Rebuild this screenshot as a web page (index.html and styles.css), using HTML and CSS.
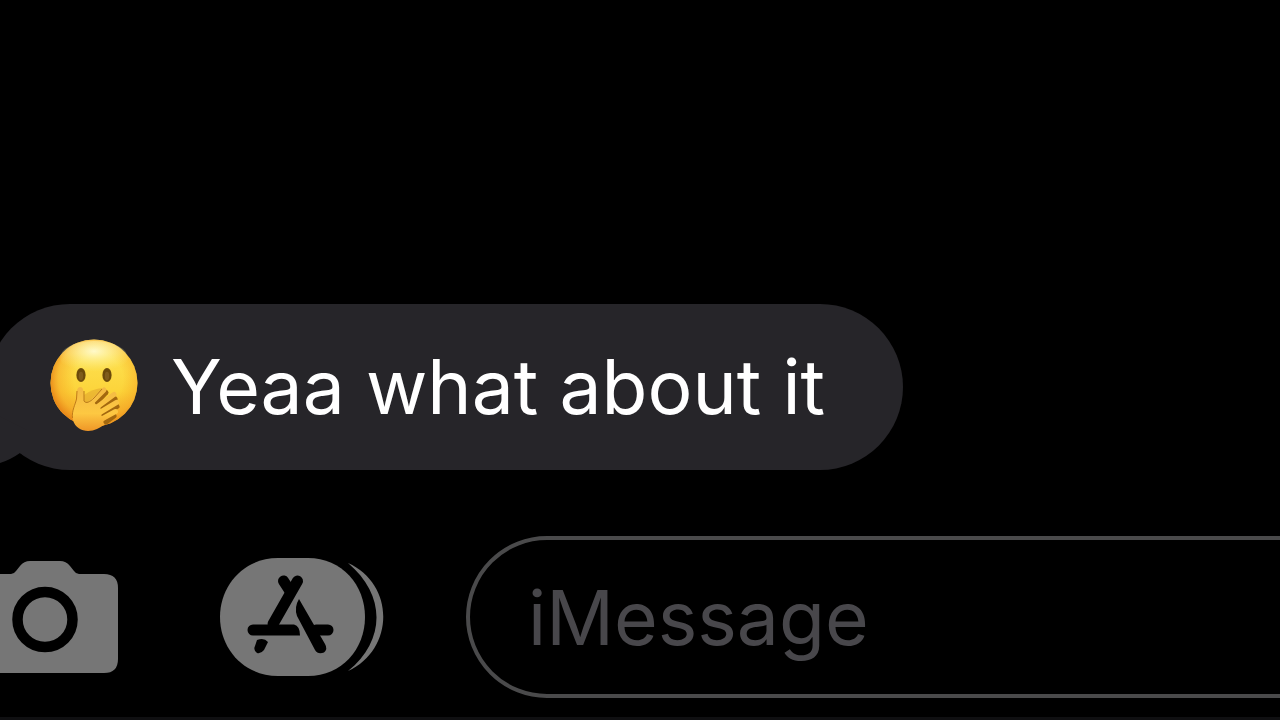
FILE: index.html
```html
<!DOCTYPE html>
<html lang="en">
<head>
    <meta charset="UTF-8">
    <meta name="viewport" content="width=device-width, initial-scale=1.0">
    <title>iMessage</title>
    <link rel="stylesheet" href="styles.css">
</head>
<body>

    <main class="chat">
        <div class="bubble">
            <!-- bubble tail -->
            <svg class="tail" viewBox="0 0 60 60" aria-hidden="true">
                <path d="M20 0 L60 20 V47 L53 43 Q43 50 33 53 Q22 56 0 56 Q18 40 20 0Z" fill="#262529"/>
            </svg>
            <svg class="emoji" viewBox="48 338 92 96" role="img" aria-label="Face with hand over mouth">
                <defs>
                    <linearGradient id="face" x1="0" y1="0" x2="0" y2="1">
                        <stop offset="0" stop-color="#ffed86"/>
                        <stop offset="0.2" stop-color="#fde04f"/>
                        <stop offset="0.6" stop-color="#fcd43a"/>
                        <stop offset="1" stop-color="#f0a429"/>
                    </linearGradient>
                    <radialGradient id="edge" cx="0.55" cy="0.45" r="0.56">
                        <stop offset="0.5" stop-color="#f7a51c" stop-opacity="0"/>
                        <stop offset="0.82" stop-color="#f5a122" stop-opacity="0.5"/>
                        <stop offset="1" stop-color="#e88718" stop-opacity="0.95"/>
                    </radialGradient>
                    <radialGradient id="shine" cx="0.5" cy="0.3" r="0.6">
                        <stop offset="0" stop-color="#fffbd0" stop-opacity="0.95"/>
                        <stop offset="1" stop-color="#fff08a" stop-opacity="0"/>
                    </radialGradient>
                    <linearGradient id="hand" gradientUnits="userSpaceOnUse" x1="0" y1="386" x2="0" y2="430">
                        <stop offset="0" stop-color="#f3b944"/>
                        <stop offset="0.6" stop-color="#fdc842"/>
                        <stop offset="1" stop-color="#ef9627"/>
                    </linearGradient>
                </defs>
                <circle cx="94" cy="382" r="43.5" fill="url(#face)"/>
                <circle cx="94" cy="382" r="43.5" fill="url(#edge)"/>
                <ellipse cx="94" cy="357" rx="34" ry="17" fill="url(#shine)"/>
                <ellipse cx="81" cy="374" rx="4.6" ry="7" fill="#6b4a0b"/>
                <ellipse cx="107" cy="374" rx="4.6" ry="7" fill="#6b4a0b"/>
                <ellipse cx="81" cy="375" rx="2.2" ry="4.2" fill="#7f5c1c"/>
                <ellipse cx="107" cy="375" rx="2.2" ry="4.2" fill="#7f5c1c"/>
                <!-- shading over the hidden mouth -->
                <path d="M84 394 Q92 388 103 387 L94 398 Q88 404 84 400Z" fill="#dd9f2c" opacity="0.5"/>
                <!-- palm and thumb -->
                <path d="M73 419 C71 411 75 403 76.500 398 L77 389 Q78 385 82 386.500 C84 389 84 395 84 400
                    C86 403 90 401 94 397 L106 402 L111 415 C107 421 104 425 97 428 C88 432 76 430 73 419Z" fill="url(#hand)"/>
                <!-- fingers -->
                <g stroke="#a3680f" stroke-width="5" stroke-linecap="round">
                    <path d="M97 401 L106 391.500"/>
                    <path d="M103 407 L115 398"/>
                    <path d="M104 414 L117 405.500"/>
                    <path d="M106 421 L114 415"/>
                </g>
                <g stroke="url(#hand)" stroke-width="5" stroke-linecap="round">
                    <path d="M92 401 L104 389"/>
                    <path d="M97 406 L114 393.500"/>
                    <path d="M99 412 L116.500 401.500"/>
                    <path d="M100 419 L115.500 410.500"/>
                </g>
                <path d="M72.500 417 C71.500 410 75.500 403 76.500 398 L77 390" fill="none" stroke="#c17b18" stroke-width="1"/>
                <path d="M84 390 V400 C86 403 90 401 94 397 L102 388" fill="none" stroke="#b97a1a" stroke-width="1"/>
            </svg>
            <p>Yeaa what about it</p>
        </div>

        <form class="composer">
            <button type="button" class="icon-button" aria-label="Camera">
                <svg width="146" height="112" viewBox="0 0 146 112" aria-hidden="true">
                    <path d="M14 13 H39 Q42 13 44 10 L48 5 Q52 0 58 0 H88 Q94 0 98 5 L102 10 Q104 13 107 13 H132 Q146 13 146 27 V98 Q146 112 132 112 H14 Q0 112 0 98 V27 Q0 13 14 13Z" fill="#767676"/>
                    <circle cx="73" cy="58.500" r="27.500" fill="none" stroke="#000" stroke-width="10.500"/>
                </svg>
            </button>
            <button type="button" class="icon-button" aria-label="Apps">
                <svg width="164" height="118" viewBox="220 559 164 118" aria-hidden="true">
                    <path d="M348 564 C395 585 395 650 348 672 C386 641 386 596 348 564Z" fill="#767676"/>
                    <path d="M278 559 H308 C342 559 365 586 365 618 C365 650 342 677 308 677 H278 C244 677 220 650 220 618 C220 586 244 559 278 559Z" fill="#767676"/>
                    <g stroke="#000" stroke-width="11" stroke-linecap="round" fill="none">
                        <path d="M283.500 582 L290 592"/>
                        <path d="M297.500 582 L273 625"/>
                        <path d="M316 631 H328"/>
                    </g>
                    <path d="M253 625.500 H294 Q300 627 300 636.500 H253 A5.500 5.500 0 0 1 253 625.500Z" fill="#000"/>
                    <path d="M299 600 L325 645 Q328 650 324 653.500 Q318 656 315 651 L297 617 Q294 608 299 600Z" fill="#000"/>
                    <path d="M257 641 Q264 638 268 643 L264 651 Q261 655 257 654 Q253 651 255 647Z" fill="#000"/>
                </svg>
            </button>
            <input class="message-field" type="text" placeholder="iMessage" aria-label="iMessage">
        </form>
    </main>

</body>
</html>
```
FILE: styles.css
```css
* {
    margin: 0;
    padding: 0;
    box-sizing: border-box;
}

body {
    font-family: Inter, "Liberation Sans", sans-serif;
    background: #000;
    color: #fff;
    overflow: hidden;
}

.chat {
    min-height: 100vh;
    display: flex;
    flex-direction: column;
    justify-content: flex-end;
    overflow: hidden;
    border-bottom: 3px solid #0f0f11;
}

.bubble {
    position: relative;
    display: flex;
    align-items: center;
    align-self: flex-start;
    gap: 31px;
    margin-left: -13px;
    padding: 35px 78px 35px 61px;
    border-radius: 83px;
    background: #262529;
}

.bubble p {
    font-size: 75px;
    line-height: 96px;
    white-space: nowrap;
}

.tail {
    position: absolute;
    left: -20px;
    bottom: 0;
    width: 60px;
    height: 60px;
}

.emoji {
    flex: none;
    width: 92px;
    height: 96px;
}

.composer {
    display: flex;
    align-items: center;
    margin: 66px -80px 19px -28px;
}

.icon-button {
    flex: none;
    margin-right: 102px;
    border: none;
    background: none;
}

.icon-button svg {
    display: block;
}

.icon-button + .message-field {
    margin-left: -20px;
}

.message-field {
    flex: 1;
    min-width: 0;
    height: 162px;
    padding: 0 58px;
    border: 4px solid #4a4a4b;
    border-radius: 81px;
    background: transparent;
    color: #fff;
    font-family: inherit;
    font-size: 75px;
    outline: none;
}

.message-field::placeholder {
    color: #48474b;
    opacity: 1;
}
```
